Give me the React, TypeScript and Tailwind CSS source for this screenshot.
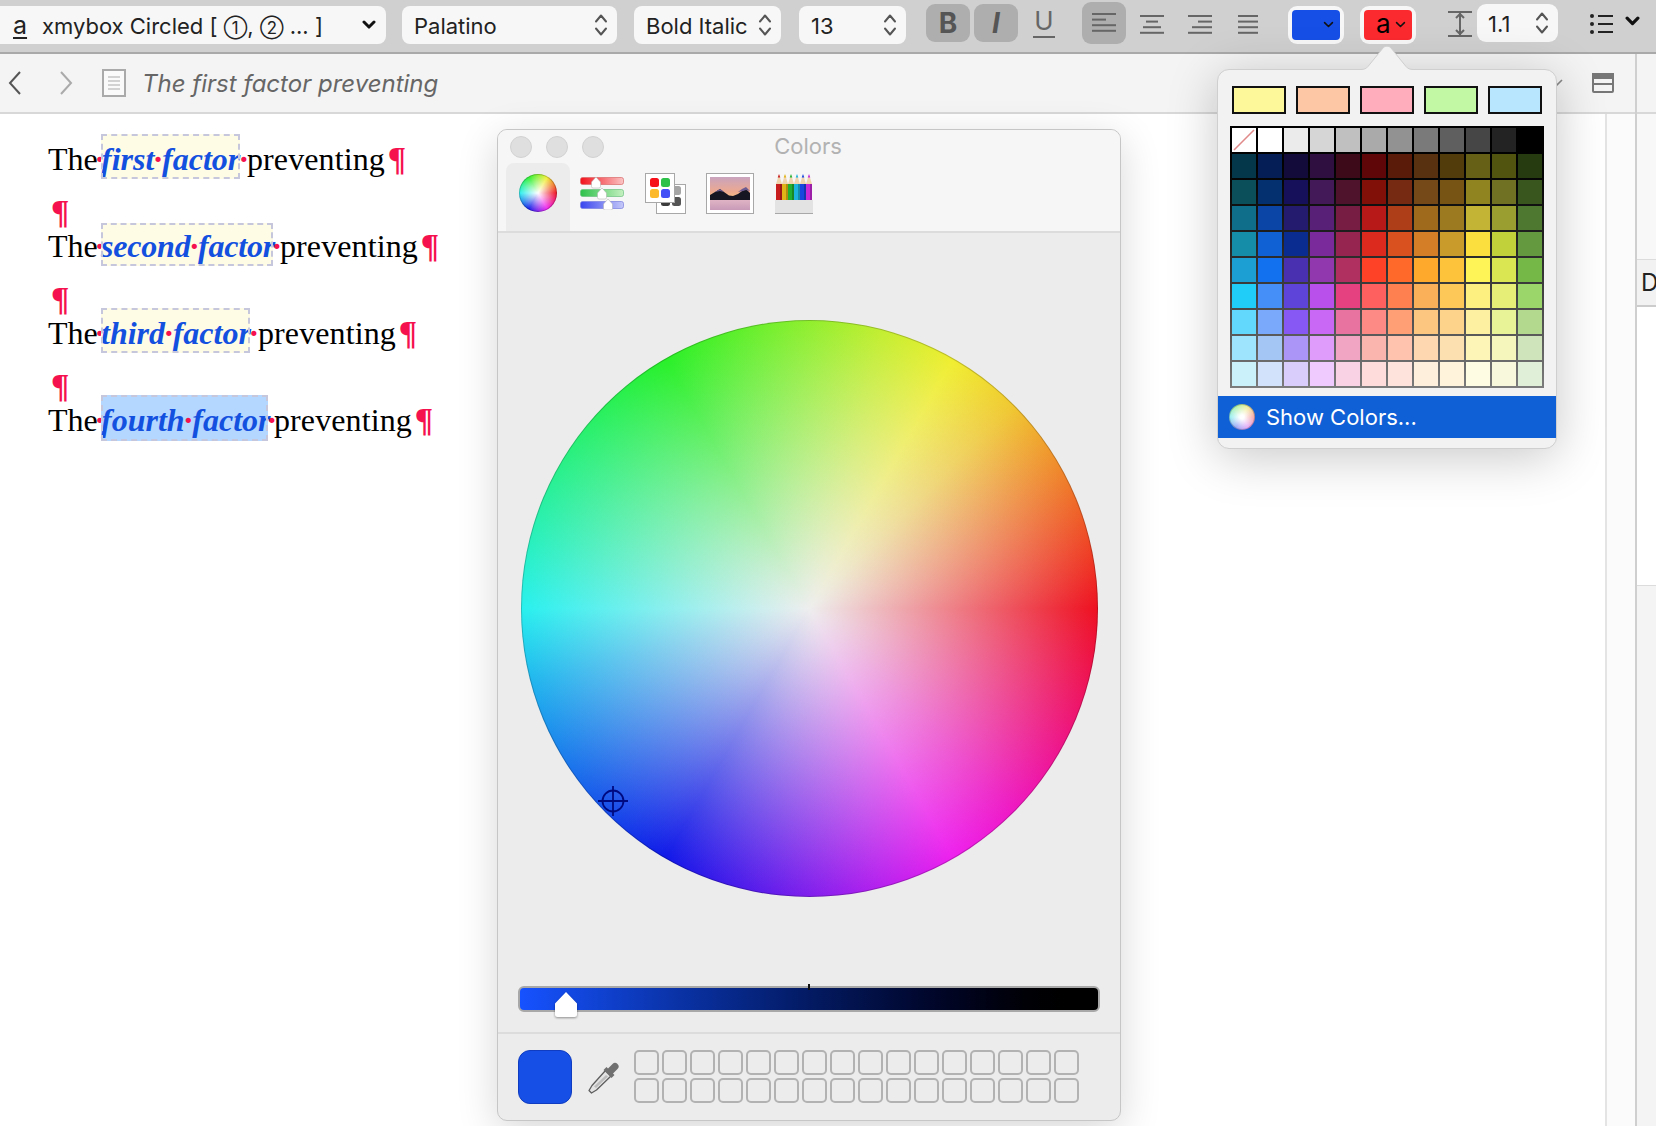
import React from "react";

const UI = "[font-family:Inter,'Noto_Sans_CJK_SC',sans-serif]";

const GRID: string[][] = [
  ["none", "#ffffff", "#ebebeb", "#d6d6d6", "#c0c0c0", "#aaaaaa", "#929292", "#7a7a7a", "#5f5f5f", "#464646", "#232323", "#000000"],
  ["#04374a", "#051f56", "#130c3a", "#2e0f40", "#3c0a18", "#5e0608", "#5a1c08", "#583110", "#523c0c", "#666016", "#50540e", "#263c10"],
  ["#0b4f5a", "#043070", "#16105a", "#431958", "#4f142c", "#811008", "#762a12", "#764a18", "#785414", "#8f8420", "#717124", "#39561f"],
  ["#0f6e8a", "#0b46a6", "#241a6e", "#592078", "#771d44", "#b71818", "#ae3e18", "#a06a1d", "#9c7a20", "#c3b436", "#9a9d30", "#4e7830"],
  ["#158da9", "#1061d4", "#0a2b8f", "#7b2a9c", "#96254f", "#dc2a1f", "#d9511f", "#d47e27", "#c99b2a", "#fbdf3f", "#c0d13a", "#65993f"],
  ["#1ca0d4", "#1171ee", "#4930b0", "#9238ae", "#b03060", "#fe4228", "#ff6a2b", "#fea82c", "#fdc33a", "#fef458", "#dae652", "#76b848"],
  ["#20ccf8", "#4490f8", "#5e44d8", "#ba50ec", "#e54080", "#fe5f5f", "#fe8050", "#fab058", "#fdc858", "#fef080", "#e6ee78", "#9bd66a"],
  ["#62d8fc", "#7aa8fa", "#8858f5", "#c868f4", "#e873a0", "#fd8a85", "#fe9f75", "#fcc580", "#fdd28a", "#fdf0a0", "#e8f296", "#b2d98e"],
  ["#9ee4fd", "#a4c6f5", "#ab96f8", "#e09cfa", "#f2a5c2", "#f9b5ae", "#ffc3ae", "#fed6b0", "#fde0b0", "#fdf5b8", "#f5f6bc", "#d0e4bc"],
  ["#cbf1fb", "#d2e2fb", "#d8cdfb", "#efcaff", "#f9d3e4", "#fedcdc", "#fee3dc", "#feeedc", "#fff3dc", "#fefde4", "#f8f9dc", "#dfefd8"],
];

function Stepper() {
  return (
    <svg width="14" height="22" viewBox="0 0 14 22" fill="none" stroke="#555" strokeWidth="2" strokeLinecap="round" strokeLinejoin="round">
      <path d="M2 7.5 7 1.5l5 6" />
      <path d="M2 14.5l5 6 5-6" />
    </svg>
  );
}

function Chevron({ w = 14, color = "#111", sw = 3 }: { w?: number; color?: string; sw?: number }) {
  return (
    <svg width={w} height={w * 0.65} viewBox="0 0 14 9" fill="none" stroke={color} strokeWidth={sw} strokeLinecap="round" strokeLinejoin="round">
      <path d="M2 2l5 5 5-5" />
    </svg>
  );
}

function AlignIcon({ lines }: { lines: [number, number][] }) {
  return (
    <svg width="24" height="20" viewBox="0 0 24 20" fill="#666">
      {lines.map(([x, w], i) => (
        <rect key={i} x={x} y={i * 5.6} width={w} height="2" />
      ))}
    </svg>
  );
}

function Sel({ className, label }: { className: string; label: string }) {
  return (
    <div className={`h-[38px] bg-[#f7f7f7] rounded-lg flex items-center justify-between pl-[12px] pr-[9px] text-[22px] text-[#222] ${className}`}>
      <span className="whitespace-nowrap pt-[2px]">{label}</span>
      <Stepper />
    </div>
  );
}

function Dot() {
  return <span className="mx-[-1.5px] text-[#f5104e] font-bold not-italic">·</span>;
}

function Pilcrow({ className = "" }: { className?: string }) {
  return <span className={`text-[#f5104e] font-bold text-[34px] ${className}`}>¶</span>;
}

function Line({ word, boxClass, dotClass }: { word: string; boxClass: string; dotClass: string }) {
  return (
    <div className="flex items-start h-[46px] leading-[50px] whitespace-nowrap">
      <span className="w-[48px]">The</span>
      <span className="w-[5px]"><Dot /></span>
      <div className={`shrink-0 outline-2 outline-dashed -outline-offset-2 outline-[#c6c6dc] font-bold italic text-[#1450e0] ${boxClass}`}>
        {word}
        <Dot />
        factor
      </div>
      <span className={dotClass}><Dot /></span>
      <span className="ml-[2px] tracking-[0.1px]">preventing</span>
      <Pilcrow className="ml-[3px]" />
    </div>
  );
}

function EmptyPilcrow() {
  return (
    <div className="h-[41px] leading-[63px] pl-[3px]">
      <Pilcrow />
    </div>
  );
}

function SliderIcon() {
  const thumb = "M-4.500 4.500v-4.500L0-5l4.500 5v4.500a1.500 1.500 0 0 1-1.500 1.500h-6a1.500 1.500 0 0 1-1.500-1.500z";
  return (
    <svg width="44" height="34" viewBox="0 0 44 34" className="ml-[10px] mt-[13px]">
      <defs>
        <linearGradient id="sr"><stop offset="0" stopColor="#f2121c" /><stop offset="1" stopColor="#fbc4c4" /></linearGradient>
        <linearGradient id="sg"><stop offset="0" stopColor="#2ec14a" /><stop offset="1" stopColor="#c4f0c0" /></linearGradient>
        <linearGradient id="sb"><stop offset="0" stopColor="#3a46ee" /><stop offset="1" stopColor="#c4c8f8" /></linearGradient>
      </defs>
      <rect x="0.500" y="1.500" width="43" height="7" rx="2" fill="url(#sr)" stroke="#d96a6a" strokeWidth="0.700" />
      <rect x="0.500" y="13.500" width="43" height="7" rx="2" fill="url(#sg)" stroke="#6cc080" strokeWidth="0.700" />
      <rect x="0.500" y="25.500" width="43" height="7" rx="2" fill="url(#sb)" stroke="#7a80e0" strokeWidth="0.700" />
      <g fill="#fff" stroke="#aaa" strokeWidth="0.500">
        <path transform="translate(16 6)" d={thumb} />
        <path transform="translate(22 17)" d={thumb} />
        <path transform="translate(28 28)" d={thumb} />
      </g>
    </svg>
  );
}

function PaletteIcon() {
  return (
    <svg width="41" height="41" viewBox="0 0 41 41" className="ml-[21px] mt-[10px]">
      <rect x="11.500" y="11.500" width="29" height="29" fill="#fff" stroke="#a8a8a8" />
      <rect x="16" y="24" width="9" height="9" rx="2.500" fill="#3b3b3b" />
      <rect x="27" y="24" width="9" height="9" rx="2.500" fill="#555" />
      <rect x="27" y="13" width="9" height="9" rx="2.500" fill="#a5a5a5" />
      <rect x="0.500" y="0.500" width="29" height="29" fill="#fff" stroke="#a8a8a8" />
      <rect x="5" y="5" width="9" height="9" rx="2.500" fill="#f5101a" />
      <rect x="16" y="5" width="9" height="9" rx="2.500" fill="#2ec14a" />
      <rect x="5" y="16" width="9" height="9" rx="2.500" fill="#fdb92c" />
      <rect x="16" y="16" width="9" height="9" rx="2.500" fill="#4350f5" />
    </svg>
  );
}

function ImageIcon() {
  return (
    <svg width="48" height="41" viewBox="0 0 48 41" className="ml-[20px] mt-[10px]">
      <defs>
        <linearGradient id="sky" x1="0" y1="0" x2="0" y2="1">
          <stop offset="0" stopColor="#c9a3be" />
          <stop offset="0.450" stopColor="#eda98f" />
          <stop offset="0.700" stopColor="#f9c77e" />
        </linearGradient>
        <linearGradient id="water" x1="0" y1="0" x2="0" y2="1">
          <stop offset="0" stopColor="#e0b4c4" />
          <stop offset="1" stopColor="#c89ab8" />
        </linearGradient>
      </defs>
      <rect x="0.500" y="0.500" width="47" height="40" fill="#fff" stroke="#a8a8a8" />
      <rect x="4" y="4" width="40" height="33" fill="url(#sky)" />
      <path d="M4 22l5-3 5-3 4 3 5 3.500 4 0.500 5-2 4-3 4-2 4 4v7.500H4z" fill="#161622" />
      <path d="M9 19l5-3 4 3-4-1zM32 19l4-3 4-2 4 4-4-1-3 1z" fill="#6a5a90" />
      <rect x="4" y="27" width="40" height="10" fill="url(#water)" />
    </svg>
  );
}

function PencilsIcon() {
  const cols = ["#c81e1e", "#e0b416", "#22b030", "#1cb4dc", "#1a46e0", "#c828d8"];
  return (
    <svg width="38" height="40" viewBox="0 0 38 40" className="ml-[21px] mt-[11px]">
      {cols.map((c, i) => (
        <g key={c} transform={`translate(${1 + i * 6} 0)`}>
          <path d="M0 10l2.200-7h1.600L6 10z" fill="#f0d4ae" />
          <path d="M1.700 3.500 3 0l1.300 3.500z" fill={c} />
          <rect x="0" y="10" width="6" height="17" fill={c} />
          <rect x="4" y="10" width="2" height="17" fill="#000" opacity="0.220" />
        </g>
      ))}
      <rect x="0" y="26" width="38" height="14" fill="#e3e3e3" />
      <rect x="0" y="39" width="38" height="1" fill="#a8a8a8" />
    </svg>
  );
}

function Eyedropper() {
  return (
    <svg width="32" height="32" viewBox="0 0 32 32" className="ml-[16px] mt-[12px]">
      <path d="M17.500 8.500 23 14 8.500 28 3.500 31 1 28.500 4 23.500z" fill="#e4e4e4" stroke="#5e5e5e" strokeWidth="1.300" strokeLinejoin="round" />
      <path d="M6 24.500 18 13l2 1.500L8 26z" fill="#bdbdbd" />
      <path d="M15.500 8 23.500 16l3-3-1.500-1.500 4.500-4.500a3.500 3.500 0 0 0-5-5L20 6.500 18.500 5z" fill="#707070" />
    </svg>
  );
}

function ColorsPanel() {
  return (
    <div className={`absolute left-[497px] top-[129px] w-[624px] h-[992px] rounded-[10px] border border-[#c6c6c6] bg-[#ececec] shadow-[0_10px_40px_rgba(0,0,0,0.16)] flex flex-col overflow-hidden ${UI}`}>
      <div className="bg-[#f6f6f6] border-b-2 border-[#dcdcdc] flex flex-col">
        <div className="h-[33px] grid grid-cols-[1fr_auto_1fr] items-center pl-[12px]">
          <div className="flex gap-[14px]">
            <div className="w-[22px] h-[22px] rounded-full bg-[#dfdfdf] border border-[#d2d2d2]" />
            <div className="w-[22px] h-[22px] rounded-full bg-[#dfdfdf] border border-[#d2d2d2]" />
            <div className="w-[22px] h-[22px] rounded-full bg-[#dfdfdf] border border-[#d2d2d2]" />
          </div>
          <div className="text-[22px] text-[#b2b2b2] leading-none pr-[14px] pb-[2px]">Colors</div>
          <div />
        </div>
        <div className="h-[68px] flex items-start">
          <div className="ml-[8px] w-[64px] h-full rounded-t-lg bg-[#ececec] flex items-start justify-center pt-[11px]">
            <div className="w-[38px] h-[38px] rounded-full border border-black/20 bg-origin-border bg-[image:radial-gradient(closest-side,#ffffff,rgba(255,255,255,0)),conic-gradient(from_90deg,#ee1020,#ee20ee,#1018e8,#28f0ee,#28f028,#f0ee30,#ee1020)]" />
          </div>
          <SliderIcon />
          <PaletteIcon />
          <ImageIcon />
          <PencilsIcon />
        </div>
      </div>
      <div className="flex-1 flex flex-col items-center">
        <div className="relative mt-[87px] w-[577px] h-[577px] rounded-full border border-black/20 bg-origin-border bg-[image:radial-gradient(closest-side,#eeeeee,rgba(238,238,238,0)),conic-gradient(from_90deg,#ee1020_0deg,#ee18c4_45deg,#ee20ee_60deg,#b820ee_75deg,#1018e8_120deg,#20b4ee_165deg,#28f0ee_180deg,#28f0b8_195deg,#28f028_240deg,#c4ee30_285deg,#f0ee30_300deg,#f0c830_315deg,#ee1020_360deg)]">
          <svg width="30" height="30" viewBox="0 0 30 30" fill="none" stroke="#000a80" strokeWidth="1.800" className="absolute left-[76px] top-[465px]">
            <circle cx="15" cy="15" r="10.500" />
            <path d="M15 0v30M0 15h30" />
          </svg>
        </div>
        <div className="relative mt-[89px] -ml-[1px] w-[582px] h-[26px] rounded-[6px] border-2 border-[#a8a8a8] bg-gradient-to-r from-[#1652ff] to-[#000000]">
          <div className="absolute left-[288px] -top-[4px] w-[2px] h-[6px] bg-[#111]" />
          <svg width="24" height="26" viewBox="0 0 24 26" className="absolute left-[34px] top-[4px] drop-shadow-[0_1px_1px_rgba(0,0,0,0.4)]">
            <path d="M12 0 23 11.500v11a2.500 2.500 0 0 1-2.500 2.500h-17A2.500 2.500 0 0 1 1 22.500v-11z" fill="#fff" />
          </svg>
        </div>
        <div className="w-full mt-[20px] border-t-2 border-[#dcdcdc] flex items-start pl-[20px] pt-[16px]">
          <div className="w-[54px] h-[54px] rounded-[12px] bg-[#164fe6] border border-[#0f3cc0]" />
          <Eyedropper />
          <div className="ml-[14px] grid grid-cols-[repeat(16,25px)] grid-rows-[25px_25px] gap-x-[3px] gap-y-[3px]">
            {Array.from({ length: 32 }).map((_, i) => (
              <div key={i} className="rounded-[5px] border-2 border-[#b2b2b2]" />
            ))}
          </div>
        </div>
      </div>
    </div>
  );
}

function Popover() {
  return (
    <>
      <div className={`absolute left-[1217px] top-[69px] w-[340px] h-[380px] rounded-[12px] border border-[#cfcfcf] bg-[#f2f2f2] shadow-[0_8px_50px_rgba(0,0,0,0.22)] flex flex-col overflow-hidden ${UI}`}>
        <div className="flex gap-[10px] pl-[14px] pt-[16px]">
          {["#fdf99a", "#fdc6a5", "#ffadbd", "#c2f8a4", "#b9e6ff"].map((c) => (
            <div key={c} className="w-[54px] h-[28px] border-2 border-[#111]" style={{ backgroundColor: c }} />
          ))}
        </div>
        <div className="ml-[12px] mt-[12px] w-[314px] h-[262px] p-[2px] grid grid-cols-[repeat(12,24px)] grid-rows-[repeat(10,24px)] gap-[2px] bg-gradient-to-b from-[#000000] to-[#7c7c7c]">
          {GRID.flat().map((c, i) =>
            c === "none" ? (
              <svg key={i} width="24" height="24" viewBox="0 0 24 24" className="bg-white">
                <path d="M2 22 22 2" stroke="#e08a8a" strokeWidth="1.600" />
              </svg>
            ) : (
              <div key={i} style={{ backgroundColor: c }} />
            ),
          )}
        </div>
        <div className="mt-[8px] h-[42px] bg-[#0f5fd6] flex items-center pl-[11px] text-white text-[22px]">
          <div className="w-[26px] h-[26px] rounded-full border border-black/20 bg-origin-border bg-[image:radial-gradient(closest-side,#ffffff_15%,rgba(255,255,255,0)),conic-gradient(from_90deg,#f5a0a0,#e0a0f5,#8f9ff5,#90eef0,#a8f0a0,#f0ec90,#f5a0a0)]" />
          <span className="ml-[11px]">Show Colors...</span>
        </div>
      </div>
      <svg width="60" height="26" viewBox="0 0 60 26" className="absolute left-[1357px] top-[45px]">
        <path d="M0 24.500h4c3 0 5.500-1 7-3L26 3c2-2.400 6-2.400 8 0l15 18.500c1.500 2 4 3 7 3h4V26H0z" fill="#f2f2f2" stroke="none" />
        <path d="M0 24.500h4c3 0 5.500-1 7-3L26 3c2-2.400 6-2.400 8 0l15 18.500c1.500 2 4 3 7 3h4" fill="none" stroke="#cfcfcf" />
      </svg>
    </>
  );
}

export default function App() {
  return (
    <div className={`relative w-[1656px] h-[1126px] overflow-hidden bg-white flex flex-col ${UI}`}>
      {/* Toolbar */}
      <div className="h-[54px] shrink-0 bg-[#d0d0d0] border-b-2 border-[#a9a9a9] flex items-start pt-[6px]">
        <div className="w-[386px] h-[38px] bg-[#f7f7f7] rounded-r-lg flex items-center pl-[13px] pr-[10px] text-[22px] text-[#222]">
          <span className="underline underline-offset-[3px] w-[29px] text-[25px] leading-none">a</span>
          <span className="whitespace-nowrap pt-[2px]">
            xmybox Circled [ <span className="text-[17px]">①</span>, <span className="text-[17px]">②</span> ... ]
          </span>
          <span className="ml-auto"><Chevron /></span>
        </div>
        <Sel className="ml-[16px] w-[215px]" label="Palatino" />
        <Sel className="ml-[17px] w-[147px]" label="Bold Italic" />
        <Sel className="ml-[18px] w-[107px]" label="13" />
        <div className="ml-[20px] -mt-[2px] w-[44px] h-[38px] rounded-[9px] bg-[#aeaeae] flex items-center justify-center text-[28px] font-bold text-[#555] leading-none">B</div>
        <div className="ml-[4px] -mt-[2px] w-[44px] h-[38px] rounded-[9px] bg-[#aeaeae] flex items-center justify-center text-[28px] font-bold italic text-[#555] leading-none">I</div>
        <div className="ml-[4px] -mt-[2px] w-[44px] h-[38px] flex flex-col items-center justify-center text-[26px] text-[#666] leading-none">
          <span className="border-b-2 border-[#666] px-[1px] pb-[2px]">U</span>
        </div>
        <div className="ml-[16px] -mt-[4px] w-[44px] h-[42px] rounded-[9px] bg-[#aeaeae] flex items-center justify-center">
          <AlignIcon lines={[[0, 24], [0, 14], [0, 24], [0, 24]]} />
        </div>
        <div className="ml-[4px] w-[44px] h-[38px] flex items-center justify-center">
          <AlignIcon lines={[[0, 24], [6, 12], [3, 18], [0, 24]]} />
        </div>
        <div className="ml-[4px] w-[44px] h-[38px] flex items-center justify-center">
          <AlignIcon lines={[[0, 24], [10, 14], [4, 20], [0, 24]]} />
        </div>
        <div className="ml-[4px] w-[44px] h-[38px] flex items-center justify-center">
          <AlignIcon lines={[[2, 20], [2, 20], [2, 20], [2, 20]]} />
        </div>
        <div className="ml-[18px] w-[56px] h-[38px] rounded-[9px] bg-[#f7f7f7] p-[4px]">
          <div className="h-[30px] rounded-[4px] bg-[#164fe6] flex items-center justify-end pr-[6px]">
            <Chevron w={11} sw={2} />
          </div>
        </div>
        <div className="ml-[16px] w-[56px] h-[38px] rounded-[9px] bg-[#f7f7f7] p-[4px]">
          <div className="h-[30px] rounded-[4px] bg-[#fb2a2f] flex items-center pl-[12px] pr-[6px] justify-between text-[26px] leading-none text-black">
            <span className="-mt-[3px]">a</span>
            <Chevron w={11} sw={2} />
          </div>
        </div>
        <svg width="24" height="26" viewBox="0 0 24 26" className="ml-[32px] mt-[5px]" fill="none" stroke="#666" strokeWidth="2">
          <path d="M0 1h24M0 25h24M12 2v22" strokeWidth="2" />
          <path d="M8 7l4-4 4 4M8 19l4 4 4-4" strokeLinejoin="round" />
        </svg>
        <div className="ml-[5px] -mt-[2px] w-[81px] h-[38px] rounded-[9px] bg-[#f7f7f7] flex items-center justify-between pl-[11px] pr-[9px] text-[22px] text-[#222]">
          <span className="pt-[2px]">1.1</span>
          <Stepper />
        </div>
        <svg width="28" height="22" viewBox="0 0 28 22" className="ml-[30px] mt-[7px]" fill="#222">
          <circle cx="4" cy="3" r="2" /><circle cx="4" cy="11" r="2" /><circle cx="4" cy="19" r="2" />
          <rect x="10" y="2" width="15" height="2" /><rect x="10" y="10" width="15" height="2" /><rect x="10" y="18" width="15" height="2" />
        </svg>
        <span className="ml-[9px] mt-[10px]"><Chevron w={15} /></span>
      </div>

      {/* Below toolbar */}
      <div className="flex-1 flex min-h-0">
        <div className="w-[1635px] shrink-0 flex flex-col">
          <div className="h-[60px] shrink-0 bg-[#f4f4f4] border-b-2 border-[#d8d8d8] flex items-center pl-[8px] relative">
            <svg width="13" height="24" viewBox="0 0 13 24" fill="none" stroke="#555" strokeWidth="2">
              <path d="M12 1 2 12l10 11" />
            </svg>
            <svg width="13" height="24" viewBox="0 0 13 24" fill="none" stroke="#aaa" strokeWidth="2" className="ml-[39px]">
              <path d="M1 1l10 11L1 23" />
            </svg>
            <svg width="24" height="28" viewBox="0 0 24 28" className="ml-[29px]" fill="#fafafa" stroke="#aaa" strokeWidth="2">
              <rect x="1" y="1" width="22" height="26" />
              <path d="M6 8h12M6 12h12M6 16h12M6 20h12" strokeWidth="1.200" />
            </svg>
            <span className="ml-[16px] pt-[2px] text-[24px] italic text-[#666] whitespace-nowrap">The first factor preventing</span>
            <svg width="8" height="9" viewBox="0 0 8 9" className="ml-auto mr-[29px]" fill="none" stroke="#888" strokeWidth="1.600">
              <path d="M0 8l7-7" />
            </svg>
            <svg width="22" height="20" viewBox="0 0 22 20" className="mr-[21px]" fill="none" stroke="#777" strokeWidth="2">
              <rect x="1" y="1" width="20" height="18" rx="1" />
              <rect x="1" y="1" width="20" height="4" fill="#777" />
              <path d="M1 11h20" />
            </svg>
          </div>
          <div className="flex-1 flex min-h-0">
            <div className="flex-1 pl-[48px] pt-[20px] [font-family:'Liberation_Serif',serif] text-[32px] text-black">
              <Line word="first" boxClass="w-[139px] h-[45px] bg-[#fffce5]" dotClass="w-[5px]" />
              <EmptyPilcrow />
              <Line word="second" boxClass="w-[172px] h-[43px] mt-[2px] leading-[46px] tracking-[-0.2px] bg-[#fffce5]" dotClass="w-[5px]" />
              <EmptyPilcrow />
              <Line word="third" boxClass="w-[149px] h-[45px] bg-[#fffce5]" dotClass="w-[6px]" />
              <EmptyPilcrow />
              <Line word="fourth" boxClass="w-[167px] h-[46px] bg-[#b3d7ff]" dotClass="w-[4px]" />
            </div>
            <div className="w-[30px] shrink-0 border-l-2 border-[#e4e4e4] bg-[#fbfbfb]" />
          </div>
        </div>
        <div className="flex-1 border-l-2 border-[#cfcfcf] flex flex-col">
          <div className="h-[60px] bg-[#f4f4f4] border-b-2 border-[#d8d8d8]" />
          <div className="h-[145px] bg-[#f8f8f8]" />
          <div className="h-[48px] bg-[#f2f2f2] border-t border-b-2 border-t-[#dcdcdc] border-b-[#cccccc] flex items-center pl-[4px] text-[24px] text-[#222] overflow-hidden">D</div>
          <div className="h-[279px] bg-white border-b border-[#dcdcdc]" />
          <div className="flex-1 bg-[#f4f4f4]" />
        </div>
      </div>

      <ColorsPanel />
      <Popover />
    </div>
  );
}
